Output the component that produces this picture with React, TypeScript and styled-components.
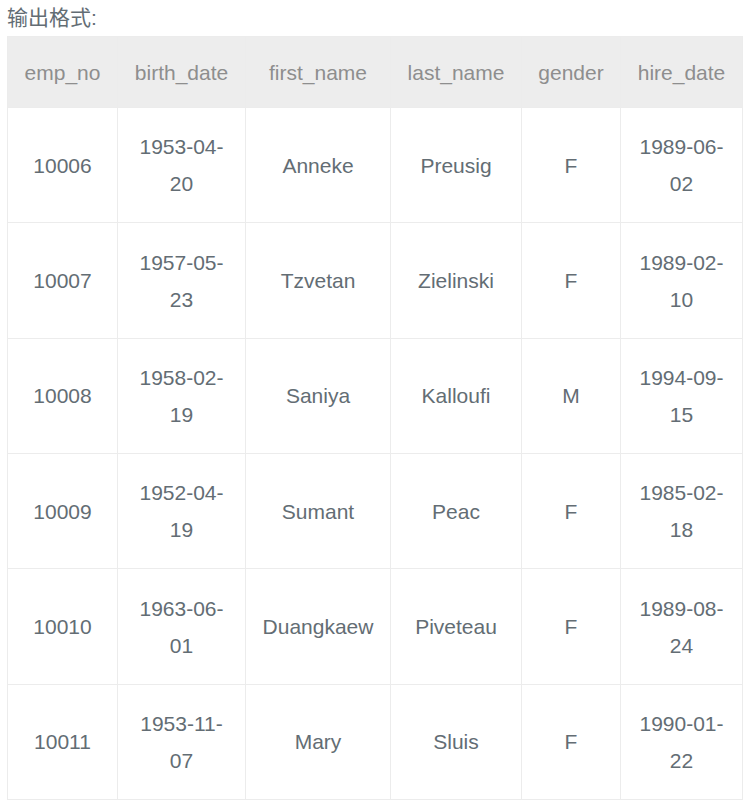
import React from "react";
import styled, { createGlobalStyle } from "styled-components";

const Global = createGlobalStyle`
  html, body { margin: 0; padding: 0; background: #ffffff; }
  body { font-family: "Liberation Sans", Arial, "Noto Sans CJK SC", sans-serif; }
`;

const Page = styled.div`
  padding: 0 7px;
  width: 735px;
`;

const Title = styled.div`
  font-family: "Liberation Sans", "Noto Sans CJK SC", sans-serif;
  font-size: 21px;
  line-height: 36px;
  height: 36px;
  color: #636d74;
`;

const Table = styled.table`
  width: 735px;
  table-layout: fixed;
  border-collapse: collapse;
  font-size: 21px;
  line-height: 37px;
`;

const Th = styled.th`
  background: #ededed;
  color: #8e8e8e;
  font-weight: normal;
  height: 70px;
  padding: 0 12px;
  border: 1px solid #ececec;
  text-align: center;
  vertical-align: middle;
`;

const Td = styled.td`
  color: #636d74;
  height: 114.35px;
  padding: 0 12px;
  border: 1px solid #ececec;
  text-align: center;
  vertical-align: middle;
  word-wrap: break-word;
`;

const cols = [110, 128, 145, 131, 99, 122];
const headers = ["emp_no", "birth_date", "first_name", "last_name", "gender", "hire_date"];
const rows = [
  ["10006", "1953-04-20", "Anneke", "Preusig", "F", "1989-06-02"],
  ["10007", "1957-05-23", "Tzvetan", "Zielinski", "F", "1989-02-10"],
  ["10008", "1958-02-19", "Saniya", "Kalloufi", "M", "1994-09-15"],
  ["10009", "1952-04-19", "Sumant", "Peac", "F", "1985-02-18"],
  ["10010", "1963-06-01", "Duangkaew", "Piveteau", "F", "1989-08-24"],
  ["10011", "1953-11-07", "Mary", "Sluis", "F", "1990-01-22"],
];

export default function App() {
  return (
    <Page>
      <Global />
      <Title>输出格式:</Title>
      <Table>
        <colgroup>
          {cols.map((w, i) => (
            <col key={i} style={{ width: w }} />
          ))}
        </colgroup>
        <thead>
          <tr>
            {headers.map((h) => (
              <Th key={h}>{h}</Th>
            ))}
          </tr>
        </thead>
        <tbody>
          {rows.map((r) => (
            <tr key={r[0]}>
              {r.map((c, i) => (
                <Td key={i}>{c}</Td>
              ))}
            </tr>
          ))}
        </tbody>
      </Table>
    </Page>
  );
}
